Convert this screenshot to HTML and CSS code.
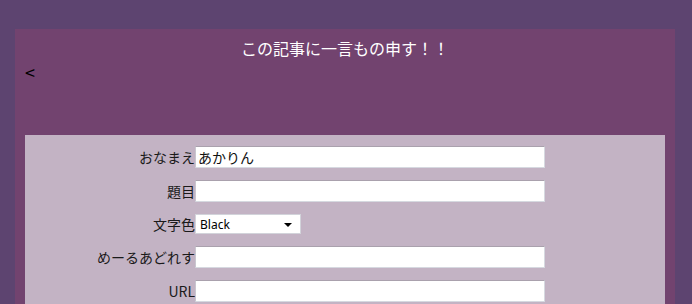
FILE: index.html
```html
<!DOCTYPE html>
<html lang="ja">
<head>
  <meta charset="UTF-8">
  <meta name="viewport" content="width=device-width, initial-scale=1.0">
  <title>この記事に一言もの申す！！</title>
  <link rel="stylesheet" href="styles.css">
</head>
<body>
  <div class="comment-page">
    <div class="comment-panel">
      <header class="comment-header">
        <h1 class="comment-title">この記事に一言もの申す！！</h1>
        <a class="back-link" href="#">&lt;</a>
      </header>

      <form class="comment-form">
        <div class="form-row">
          <label class="form-label" for="name">おなまえ</label>
          <input class="form-input" type="text" id="name" value="あかりん">
        </div>
        <div class="form-row">
          <label class="form-label" for="subject">題目</label>
          <input class="form-input" type="text" id="subject">
        </div>
        <div class="form-row select-row">
          <label class="form-label" for="color">文字色</label>
          <span class="select-wrap">
            <select class="form-select" id="color">
              <option>Black</option>
              <option>Red</option>
              <option>Blue</option>
              <option>Green</option>
            </select>
          </span>
        </div>
        <div class="form-row">
          <label class="form-label" for="mail">めーるあどれす</label>
          <input class="form-input" type="text" id="mail">
        </div>
        <div class="form-row">
          <label class="form-label" for="url">URL</label>
          <input class="form-input" type="text" id="url">
        </div>
      </form>
    </div>
  </div>
</body>
</html>
```

FILE: styles.css
```css
body {
  margin: 0;
  background-color: #5d4470;
  font-family: "Noto Sans CJK JP", "Noto Sans", sans-serif;
  color: #111;
}

.comment-page {
  padding: 29px 17px 0 15px;
}

.comment-panel {
  background-color: #72436f;
  padding: 8px 10px 0;
}

.comment-header {
  height: 98px;
}

.comment-title {
  margin: 0;
  font-size: 16px;
  font-weight: normal;
  line-height: 22px;
  text-align: center;
  color: #fff;
}

.back-link {
  display: block;
  width: 14px;
  margin-top: 5px;
  font-size: 18px;
  line-height: 16px;
  color: #000;
  text-decoration: none;
}

.comment-form {
  background-color: #c3b3c4;
  padding-top: 5px;
  height: 169px;
}

.form-row {
  display: flex;
  align-items: center;
  height: 34px;
}

.select-row {
  height: 32px;
}

.form-label {
  width: 170px;
  text-align: right;
  font-size: 14px;
  color: #1a1a1a;
}

.form-input {
  box-sizing: border-box;
  width: 350px;
  height: 22px;
  margin: 0;
  padding: 0 2px;
  border: 1px solid #d6d9e0;
  border-top-color: #aaa1ad;
  border-left-color: #c9c6cf;
  background: #fff;
  font-family: inherit;
  font-size: 14px;
  color: #111;
  outline: none;
}

.select-wrap {
  position: relative;
  display: block;
}

.select-wrap::after {
  content: "";
  position: absolute;
  right: 9px;
  top: 9px;
  border-left: 4px solid transparent;
  border-right: 4px solid transparent;
  border-top: 4px solid #000;
  pointer-events: none;
}

.form-select {
  appearance: none;
  display: block;
  box-sizing: border-box;
  width: 106px;
  height: 20px;
  margin: 0;
  padding: 0 4px;
  border: 1px solid #d2d3da;
  border-radius: 0;
  background: #fff;
  font-family: "Noto Sans", sans-serif;
  font-size: 12px;
  color: #000;
  outline: none;
}
```
